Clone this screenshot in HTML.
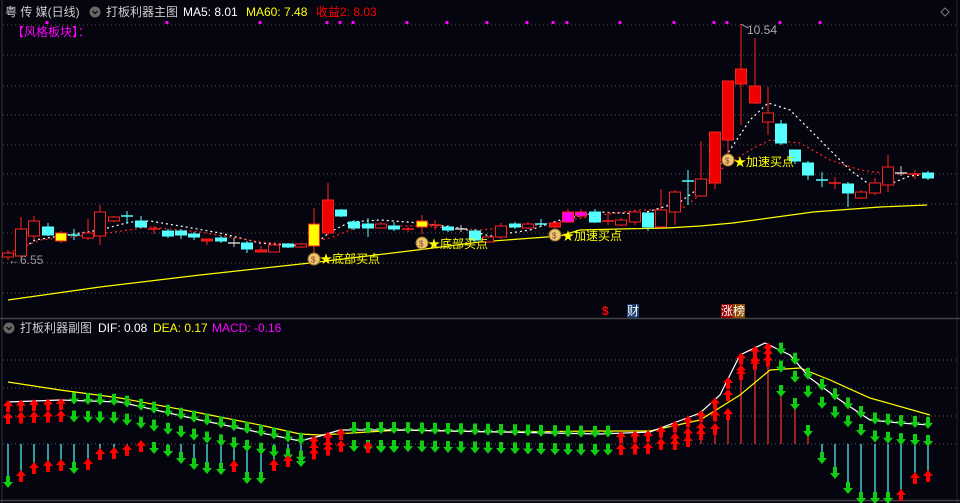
<!DOCTYPE html>
<html><head><meta charset="utf-8"><style>
body{margin:0;background:#05050f;width:960px;height:503px;overflow:hidden;font-family:"Liberation Sans","Noto Sans CJK SC",sans-serif}
svg{position:absolute;left:0;top:0}
.t{position:absolute;font-size:12px;white-space:nowrap;line-height:14px}
</style></head><body>
<svg id="s" width="960" height="503" xmlns="http://www.w3.org/2000/svg"></svg>
<div class="t" style="left:5px;top:5px;color:#ccc">粤 传 媒(日线)</div>
<div class="t" style="left:106px;top:5px;color:#ccc">打板利器主图</div>
<div class="t" style="left:183px;top:5px;color:#fff">MA5: 8.01</div>
<div class="t" style="left:246px;top:5px;color:#ff0">MA60: 7.48</div>
<div class="t" style="left:316px;top:5px;color:#f00">收益2: 8.03</div>
<div class="t" style="left:12px;top:25px;color:#f0f">【风格板块】：</div>
<div class="t" style="left:20px;top:321px;color:#ccc">打板利器副图</div>
<div class="t" style="left:98px;top:321px;color:#fff">DIF: 0.08</div>
<div class="t" style="left:153px;top:321px;color:#ff0">DEA: 0.17</div>
<div class="t" style="left:212px;top:321px;color:#f0f">MACD: -0.16</div>
<div class="t" style="left:8px;top:253px;color:#999">←6.55</div>
<div class="t" style="left:747px;top:23px;color:#aaa">10.54</div>
<div class="t" style="left:320px;top:252px;color:#ff0">★底部买点</div>
<div class="t" style="left:428px;top:237px;color:#ff0">★底部买点</div>
<div class="t" style="left:562px;top:229px;color:#ff0">★加速买点</div>
<div class="t" style="left:734px;top:155px;color:#ff0">★加速买点</div>
<div class="t" style="left:602px;top:304px;color:#f00;font-weight:bold">$</div>
<div class="t" style="left:627px;top:304px;color:#fff;background:#1a3a6a">财</div>
<div class="t" style="left:721px;top:304px;color:#fff;background:#900">涨</div>
<div class="t" style="left:733px;top:304px;color:#fff;background:#8a4a00">榜</div>
<script>
var s=document.getElementById('s'),h='';
function L(x1,y1,x2,y2,c,w,d){h+='<line x1="'+x1+'" y1="'+y1+'" x2="'+x2+'" y2="'+y2+'" stroke="'+c+'" stroke-width="'+(w||1)+'"'+(d?' stroke-dasharray="'+d+'"':'')+'/>';}
function P(pts,c,d){h+='<polyline fill="none" stroke="'+c+'" stroke-width="1.2" points="'+pts.map(p=>p.join(',')).join(' ')+'"'+(d?' stroke-dasharray="'+d+'"':'')+'/>';}
L(2,0,2,503,'#333',1);L(957,0,957,503,'#222',1);
L(0,318.5,960,318.5,'#444',1.5);L(0,500.5,960,500.5,'#444',1.5);
[25,55,86,115,145,174,204,233,263,293].forEach(y=>L(3,y,957,y,'#555',1,'1 3'));
[360,388,416,444].forEach(y=>L(3,y,957,y,'#555',1,'1 3'));
h+='<circle cx="95" cy="12" r="5.5" fill="#666"/><path d="M92.5 11l2.5 2.5 2.5-2.5" stroke="#111" stroke-width="1.5" fill="none"/>';
h+='<circle cx="9" cy="328" r="5.5" fill="#666"/><path d="M6.5 327l2.5 2.5 2.5-2.5" stroke="#111" stroke-width="1.5" fill="none"/>';
h+='<path d="M945 8l4 4-4 4-4-4z" fill="none" stroke="#777"/>';
[47,167,260,327,340,353,407,447,487,527,553,567,620,674,714,727,780,820].forEach(x=>h+='<rect x="'+(x-1.5)+'" y="21" width="3" height="3" fill="#f0f"/>');
P([[8,300],[100,287],[200,275],[310,263],[417,250],[480,242],[560,236],[580,230],[620,229],[667,228],[700,226],[733,223],[813,212],[880,207],[927,205]],'#ff0');
P([[8,257],[21,250],[35,240],[60,236],[100,230],[130,222],[150,221],[180,226],[220,233],[260,243],[300,246],[314,245],[330,232],[350,222],[380,220],[420,223],[460,228],[490,236],[530,230],[560,220],[600,212],[640,214],[680,202],[710,180],[730,150],[750,120],[768,103],[790,110],[810,130],[830,150],[850,170],[870,185],[890,184],[910,176],[930,174]],'#fff','2 3');
P([[8,253],[40,240],[100,234],[150,227],[200,232],[260,242],[300,245],[330,238],[360,226],[420,226],[480,230],[540,225],[600,215],[640,210],[680,210],[700,195],[720,170],[750,150],[770,140],[800,143],[830,160],[860,170],[890,174],[930,174]],'#f22','2 3');
var C=[[8,253,257,250,260,'r'],[21,229,256,217,258,'r'],[34,221,236,216,240,'r'],[48,227,235,223,236,'c'],[61,233,241,231,243,'y'],[74,234,236,229,240,'k'],[88,233,238,219,240,'r'],[100,212,236,205,245,'r'],[114,217,221,216,222,'r'],[127,215,217,211,224,'k'],[141,221,227,216,228,'c'],[154,228,230,226,234,'x'],[168,231,236,229,238,'c'],[181,231,235,229,239,'c'],[194,234,237,232,240,'c'],[207,239,241,239,245,'R'],[221,238,241,236,243,'c'],[234,242,244,238,247,'w'],[247,243,249,241,253,'c'],[261,250,252,246,252,'R'],[274,245,252,244,252,'r'],[288,244,247,243,248,'c'],[301,244,247,243,248,'r'],[314,224,246,208,256,'y'],[328,200,233,183,235,'R'],[341,210,216,209,217,'c'],[354,222,228,220,230,'c'],[368,224,228,218,237,'c'],[381,224,228,222,229,'r'],[394,226,229,222,231,'c'],[408,228,230,227,232,'x'],[422,221,227,215,234,'y'],[435,224,226,220,230,'x'],[448,227,230,225,232,'c'],[461,228,230,225,232,'w'],[475,231,240,229,242,'c'],[488,237,242,236,243,'r'],[501,226,237,223,239,'r'],[515,224,227,222,229,'c'],[528,224,228,222,229,'r'],[541,223,225,219,227,'k'],[555,223,227,222,228,'R'],[568,212,222,209,223,'m'],[581,212,216,209,218,'m'],[595,212,222,209,223,'c'],[608,220,222,212,225,'x'],[621,220,225,218,226,'r'],[635,212,222,212,225,'r'],[648,213,227,212,231,'c'],[661,210,227,189,228,'r'],[675,192,212,190,225,'r'],[688,180,182,170,205,'k'],[701,179,196,141,197,'r'],[715,132,183,132,189,'R'],[728,81,140,81,155,'R'],[741,69,84,24,125,'R'],[755,86,103,38,104,'R'],[768,113,122,87,135,'r'],[781,124,143,120,145,'c'],[795,150,161,150,164,'c'],[808,163,175,161,180,'c'],[822,179,181,172,187,'k'],[835,182,184,177,189,'x'],[848,184,193,182,207,'c'],[861,192,198,190,199,'r'],[875,183,193,178,195,'r'],[888,167,185,155,192,'r'],[901,172,174,166,176,'w'],[915,173,175,170,179,'x'],[928,173,178,171,180,'c']];
C.forEach(c=>{var x=c[0],t=c[5],col={r:'#f22',R:'#f22',c:'#5ff',y:'#f22',m:'#f22',w:'#ccc',x:'#f22',k:'#5ff'}[t];
L(x,c[3],x,c[4],t=='y'||t=='m'?'#f22':col,1);
if('wxk'.includes(t)){L(x-6,c[1]+1,x+6,c[1]+1,col,1.5);return;}
var f={r:'#05050f',R:'#e00',c:'#5ff',y:'#ff0',m:'#f0f'}[t];
h+='<rect x="'+(x-5.5)+'" y="'+c[1]+'" width="11" height="'+Math.max(2,c[2]-c[1])+'" fill="'+f+'" stroke="'+col+'"/>';});
L(741,24,748,28,'#aaa',1);
[[314,259],[422,243],[555,235],[728,160]].forEach(b=>h+='<circle cx="'+b[0]+'" cy="'+b[1]+'" r="6" fill="#e8c870" stroke="#a07020"/><text x="'+(b[0]-3)+'" y="'+(b[1]+3.5)+'" font-size="8" fill="#933" font-family="Liberation Sans">$</text>');
var dif=[[8,402],[60,400],[120,402],[200,420],[300,441],[320,436],[340,430],[400,430],[500,432],[600,434],[650,432],[700,413],[720,395],[740,355],[765,343],[790,355],[810,378],[840,400],[870,420],[900,423],[930,425]];
var dea=[[8,382],[60,390],[120,398],[200,413],[260,425],[300,434],[320,435],[400,430],[500,432],[600,431],[650,431],[700,420],[740,395],[770,370],[800,368],[830,380],[870,398],[930,415]];
function interp(a,x){for(var i=1;i<a.length;i++)if(x<=a[i][0]){var p=a[i-1],q=a[i];return p[1]+(q[1]-p[1])*(x-p[0])/(q[0]-p[0]);}return a[a.length-1][1];}
var bars=[484,478,470,468,467,470,466,456,455,452,448,450,453,460,466,470,471,468,480,480,467,463,463,450,447,444,444,443,443,443,444,444,444,444,444,444,444,444,444,444,444,444,444,444,444,444,444,444,444,444,440,437,430,425,410,370,357,350,387,400,427,460,475,490,500,500,500,497,480,478,475];
C.forEach((c,i)=>{var x=c[0],b=bars[i]||444;if(b>444)L(x,444,x,b,'#5ff',1.2);else if(b<444)L(x,444,x,b,'#f33',1.2);});
P(dea,'#ff0');P(dif,'#fff');
function arr(x,y,up){var c=up?'#f00':'#1c1';if(up)h+='<path d="M'+x+' '+(y-6)+'l5 6h-3v6h-4v-6h-3z" fill="'+c+'"/>';else h+='<path d="M'+x+' '+(y+6)+'l5-6h-3v-6h-4v6h-3z" fill="'+c+'"/>';}
C.forEach((c,i)=>{var x=c[0],d=interp(dif,x),p=interp(dif,x-13),up=d<p-0.3,b=bars[i]||444,pb=bars[i-1]||b;
arr(x,d+(up?4:-2),up);arr(x,d+16,up);
if(b!=444)arr(x,b+(b>444?-2:4),b<pb);});
s.innerHTML=h;
</script>
</body></html>
